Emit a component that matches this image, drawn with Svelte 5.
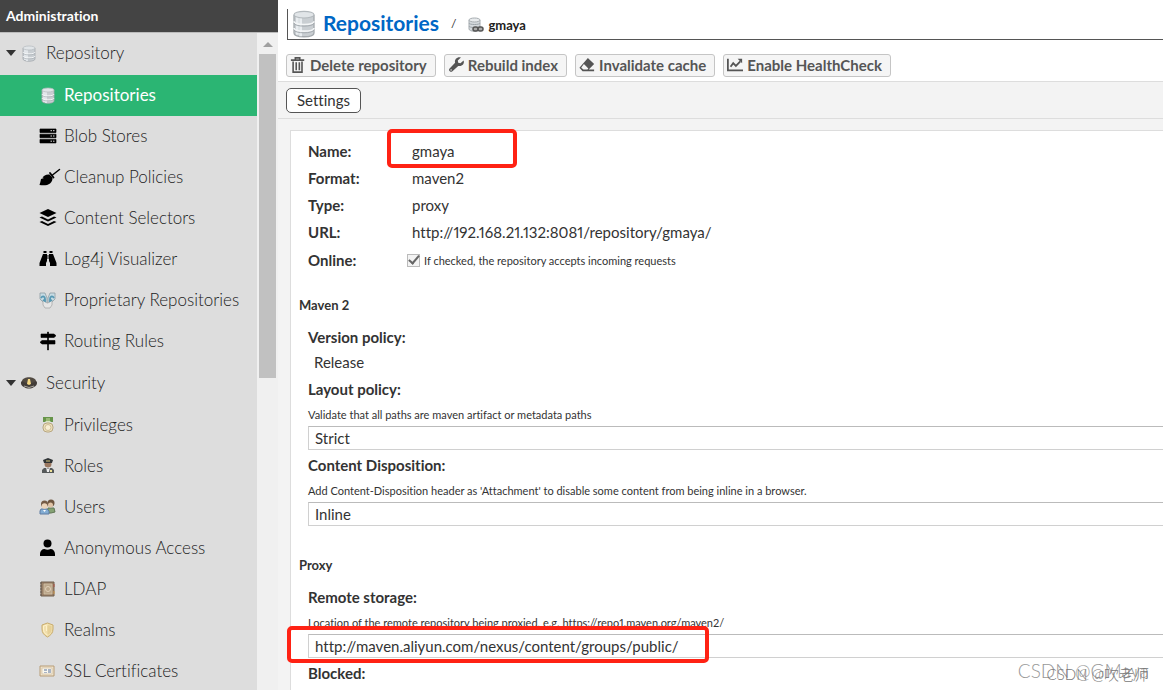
<script>
  let online = true;
  let layoutPolicy = 'Strict';
  let disposition = 'Inline';
  let remoteUrl = 'http://maven.aliyun.com/nexus/content/groups/public/';
  let selected = 'Repositories';

  const tree = [
    {
      name: 'Repository',
      icon: 'database',
      items: [
        { name: 'Repositories', icon: 'database' },
        { name: 'Blob Stores', icon: 'server' },
        { name: 'Cleanup Policies', icon: 'broom' },
        { name: 'Content Selectors', icon: 'layers' },
        { name: 'Log4j Visualizer', icon: 'binoculars' },
        { name: 'Proprietary Repositories', icon: 'proprietary' },
        { name: 'Routing Rules', icon: 'signs' }
      ]
    },
    {
      name: 'Security',
      icon: 'cap',
      items: [
        { name: 'Privileges', icon: 'medal' },
        { name: 'Roles', icon: 'officer' },
        { name: 'Users', icon: 'users' },
        { name: 'Anonymous Access', icon: 'person' },
        { name: 'LDAP', icon: 'book' },
        { name: 'Realms', icon: 'shield' },
        { name: 'SSL Certificates', icon: 'certificate' }
      ]
    }
  ];

  const actions = [
    { name: 'Delete repository', icon: 'trash' },
    { name: 'Rebuild index', icon: 'wrench' },
    { name: 'Invalidate cache', icon: 'eraser' },
    { name: 'Enable HealthCheck', icon: 'chart' }
  ];

  const summary = [
    ['Name:', 'gmaya'],
    ['Format:', 'maven2'],
    ['Type:', 'proxy'],
    ['URL:', 'http://192.168.21.132:8081/repository/gmaya/']
  ];
</script>

{#snippet icon(name)}
  <svg class="icon" viewBox="0 0 18 18" aria-hidden="true">
    {#if name === 'database'}
      <path d="M3 4v11c0 3 12 3 12 0V4" fill="#c9ced2" stroke="#a5aaae" stroke-width=".8" />
      <path d="M5 5v11M7 6v11" stroke="#e9edf0" stroke-width="1.6" />
      <path d="M3 8c0 2.500 12 2.500 12 0M3 12c0 2.500 12 2.500 12 0" fill="none" stroke="#f4f6f7" />
      <path d="M3 9c0 2.500 12 2.500 12 0M3 13c0 2.500 12 2.500 12 0" fill="none" stroke="#a5abb0" stroke-width=".6" />
      <ellipse cx="9" cy="4" rx="6" ry="2" fill="#e1e5e8" stroke="#b3b9bd" stroke-width=".7" />
    {:else if name === 'server'}
      <path d="M1 2h16v3.500H1zM1 7.200h16v3.500H1zM1 12.400h16v3.500H1z" fill="#000" stroke="#000" stroke-width=".7" stroke-linejoin="round" />
      <path d="M11.500 3.700h1.500m1 0h1.500M11.500 9h1.500m1 0h1.500M11.500 14.200h1.500m1 0h1.500" stroke="#ddd" />
    {:else if name === 'broom'}
      <path d="M20.500 1.500 13.500 7" stroke="#000" stroke-width="1.500" stroke-linecap="round" />
      <path d="m11 5 3.500 4.500" stroke="#000" stroke-width="1.800" stroke-linecap="round" />
      <path d="M10.500 6.500c-3-.5-6 1-7 3l1.500.5-3 1c-.5 2-.7 4-1.500 6 4 .7 8 .5 10.500-1.500 1.800-1.500 2.800-4 2.500-6z" />
    {:else if name === 'layers'}
      <path d="m9 0 8.500 4L9 8 .5 4z" />
      <path d="m.5 8.500 2.500-1 6 3 6-3 2.500 1L9 12.500z" />
      <path d="m.5 13 2.500-1 6 3 6-3 2.500 1L9 17z" />
    {:else if name === 'binoculars'}
      <path d="M4.500 1h3v2h-3zM10.500 1h3v2h-3zM4 4h4v7l-1 2v3H.5v-3zM10 4h4l3.500 9v3H11v-3l-1-2zM8.500 5h1v4h-1z" />
    {:else if name === 'proprietary'}
      <path d="M1 2h5l2 5v6l-3-1-4-4zM16 2h-5L9 7v6l3-1 4-4z" fill="#c6dbe3" stroke="#8d9da3" stroke-width=".8" />
      <path d="M4 9l4 3h1l4-3v5l-2 3H6l-2-3z" fill="#e6e6e6" stroke="#a8aaaa" stroke-width=".8" />
      <path d="M2 7c2-3 4-1 4 1v2L4 9M15 7c-2-3-4-1-4 1v2l2-1" fill="none" stroke="#5798b3" stroke-width="1.800" />
    {:else if name === 'signs'}
      <path d="M8.500 0h1v18h-1zM2 2h13l2 1.700-2 1.800H2zM3 8.500h13V12H3l-2-1.700z" stroke="#000" stroke-width=".6" />
    {:else if name === 'cap'}
      <path d="M2 7c1-5 13-5 14 0v3H2z" fill="#514a42" />
      <path d="M2 7C0 8 1 12 4 13c3 2 7 2 10 0 3-1 4-5 2-6-4 3-10 3-14 0z" fill="#413c38" />
      <path d="M4 12q5 3 10 0" fill="none" stroke="#aaa79f" />
      <path d="M8 5h2l1 5-2 1-2-1z" fill="#f4d782" />
    {:else if name === 'medal'}
      <path d="M4 1h10v5H4z" fill="#669449" />
      <path d="M7 2h4v3H7z" fill="#9ab975" />
      <path d="m6 5 3 3 3-3" fill="#d9e5c2" />
      <rect x="4" y="7" width="10" height="9" rx="4" fill="#efe3bd" stroke="#b7a681" />
      <circle cx="9" cy="11.500" r="3" fill="#f8eed3" stroke="#cdbd96" />
    {:else if name === 'officer'}
      <path d="m5 11 8 0 2 2v3H3v-3z" fill="#55595a" />
      <circle cx="9" cy="7" r="3.500" fill="#9c7961" />
      <path d="M4 3 9 1l5 2-1 3H5z" fill="#303436" />
      <path d="m7 10 2 2 2-2-1 5H8z" fill="#eee" />
      <path d="M7 4h4" stroke="#d2c077" />
      <path d="m11 14 2 0" stroke="#eee196" stroke-width="2" />
    {:else if name === 'users'}
      <path d="M9 10h6l1 4-4 1H8z" fill="#85a274" stroke="#617656" />
      <circle cx="12" cy="5" r="3.500" fill="#6d553f" />
      <circle cx="11.500" cy="7" r="2.500" fill="#dfc3a6" />
      <path d="M2 11h6l2 2v3H1v-3z" fill="#83add3" stroke="#5e7da3" />
      <circle cx="5.500" cy="6" r="3.500" fill="#745b46" />
      <circle cx="5.500" cy="8" r="2.800" fill="#ebd3b9" />
      <path d="m4 12 1.500 2L7 12" fill="#fff" />
    {:else if name === 'person'}
      <circle cx="8.500" cy="4.500" r="4" />
      <path d="M1 17v-2c0-3 2-5 4.500-5 2 1 4 1 6 0C14 10 16 12 16 15v2z" />
    {:else if name === 'book'}
      <path d="M2 2h13v14H2z" fill="#9b8168" stroke="#72604f" />
      <path d="M5 4h8v10H5z" fill="#bba68a" stroke="#d5c6ae" stroke-width=".7" />
      <path d="M1 3h2M1 6h2M1 9h2M1 12h2M1 15h2" stroke="#665d55" />
      <circle cx="9" cy="9" r="2.500" fill="none" stroke="#e1d1b9" />
      <path d="M15 4v3" stroke="#ae5247" /><path d="M15 11v3" stroke="#d19a4e" />
    {:else if name === 'shield'}
      <path d="m8.500 2 5.500 2v4c0 4-2 6-5.500 8C5 14 3 12 3 8V4z" fill="#f0dfad" stroke="#c9ac6c" />
      <path d="m8.500 4 4 1v3c0 3-1 4-4 6z" fill="#e6d096" />
      <path d="m8.500 4-4 1v3c0 3 1 4 4 6M7.500 5v5" fill="none" stroke="#fff1c9" />
    {:else if name === 'certificate'}
      <path d="M1 4h14v10H1z" fill="#eee2cb" stroke="#b79c77" />
      <path d="M3 6h10v6H3z" fill="#faf8ef" stroke="#d1bea1" stroke-width=".7" />
      <path d="M5 7h3v2H5zm4 0h3v4H9zm-4 3h3v1H5z" fill="#a9b4c4" />
    {:else if name === 'trash'}
      <path d="M6 3V1h5v2M1 3.500h15M3.500 5v12h10V5M7 6v9m3.500-9v9" fill="none" stroke="#555" stroke-width="1.800" />
    {:else if name === 'wrench'}
      <path d="M17.500 4 14 7l-2.500-.5L11 4 14.500.5c-4-1-7.500 2-6.500 6L1.800 13c-2 2 1.200 5 3.200 3l6.500-6c4 1 7.500-2 6-6z" fill="#555" />
      <circle cx="3.500" cy="14.500" r=".8" fill="#fff" />
    {:else if name === 'eraser'}
      <path d="m10 1 7 7-6 6h6v2H4l-3.500-4z" fill="#555" />
      <path d="m2.500 12 3-4 5 5-1 1H5z" fill="#f5f5f5" />
    {:else if name === 'chart'}
      <path d="M1 2v13h17M4 11l3-4 3 3 5-5" fill="none" stroke="#555" stroke-width="2" />
      <path d="M12 2h5v5z" fill="#555" />
    {/if}
  </svg>
{/snippet}

<div class="app">
  <aside>
    <h2>Administration</h2>
    <div class="scroller">
      <nav aria-label="Administration">
        {#each tree as group}
          <button class="row group"><span class="arrow"></span>{@render icon(group.icon)}{group.name}</button>
          <ul>
            {#each group.items as item}
              <li>
                <a class="row" class:selected={selected === item.name} href="#admin" on:click|preventDefault={() => (selected = item.name)}>
                  {@render icon(item.icon)}{item.name}
                </a>
              </li>
            {/each}
          </ul>
        {/each}
      </nav>
      <div class="scrollbar"><span class="up"></span><div class="thumb"></div></div>
    </div>
  </aside>

  <main>
    <header>
      {@render icon('database')}
      <h1><a href="#repositories">Repositories</a></h1>
      <span class="slash">/</span>
      <span class="crumb">
        <svg viewBox="0 0 16 16" aria-hidden="true">
          <path d="M1 3v9c0 3 11 3 11 0V3" fill="#d5dade" stroke="#a6acb0" />
          <path d="M1 6c0 2 11 2 11 0M1 9c0 2 11 2 11 0" fill="none" stroke="#9ca3a8" />
          <ellipse cx="6.500" cy="3" rx="5.500" ry="2" fill="#e8ebed" stroke="#a6acb0" />
          <rect x="5" y="10" width="5" height="4" rx="2" fill="#aaa" stroke="#555" stroke-width="1.500" />
          <rect x="10" y="10" width="5" height="4" rx="2" fill="#aaa" stroke="#555" stroke-width="1.500" />
        </svg>
        gmaya
      </span>
    </header>

    <div class="toolbar">
      {#each actions as action}
        <button>{@render icon(action.icon)}{action.name}</button>
      {/each}
    </div>

    <div class="tabs"><button>Settings</button></div>

    <div class="body">
      <form on:submit|preventDefault>
        <dl>
          {#each summary as [label, value], i}
            <dt>{label}</dt>
            <dd class:marked={i === 0}>{value}</dd>
          {/each}
        </dl>
        <div class="online">
          <label class="label" for="online">Online:</label>
          <span class="tick">
            <input id="online" type="checkbox" bind:checked={online} />
            <span>If checked, the repository accepts incoming requests</span>
          </span>
        </div>

        <h3>Maven 2</h3>
        <section>
          <div class="label">Version policy:</div>
          <div class="value">Release</div>
          <label class="label" for="layout">Layout policy:</label>
          <p>Validate that all paths are maven artifact or metadata paths</p>
          <select id="layout" bind:value={layoutPolicy}>
            <option>Strict</option>
            <option>Permissive</option>
          </select>
          <label class="label" for="disposition">Content Disposition:</label>
          <p>Add Content-Disposition header as 'Attachment' to disable some content from being inline in a browser.</p>
          <select id="disposition" bind:value={disposition}>
            <option>Inline</option>
            <option>Attachment</option>
          </select>
        </section>

        <h3 class="proxy">Proxy</h3>
        <section>
          <label class="label" for="remote">Remote storage:</label>
          <p>Location of the remote repository being proxied, e.g. https://repo1.maven.org/maven2/</p>
          <div class="remote"><input id="remote" type="text" bind:value={remoteUrl} /></div>
          <div class="label">Blocked:</div>
        </section>
      </form>
    </div>
  </main>
  <div class="watermark">CSDN @GMaya</div>
  <div class="watermark small">CSDN @吹老师</div>
</div>

<style>
  :global(body) {
    overflow: hidden;
  }

  .app {
    position: relative;
    display: flex;
    height: 100vh;
    overflow: hidden;
    background: #fff;
    color: #333;
    font: 15px/20px Lato, 'Noto Sans CJK SC', sans-serif;
    font-variant-numeric: proportional-nums;
    font-variant-ligatures: none;
  }

  .app *,
  .app *::after {
    box-sizing: border-box;
  }

  button,
  input,
  select {
    font: inherit;
    color: inherit;
  }

  .icon {
    flex: none;
    width: 18px;
    height: 18px;
    overflow: visible;
  }

  aside {
    display: flex;
    flex-direction: column;
    flex: none;
    width: 278px;
  }

  h2 {
    margin: 0;
    padding: 6px;
    height: 33px;
    border-bottom: 1px solid #bbb;
    background: #444;
    color: #fff;
    font-size: 14px;
    line-height: 20px;
  }

  .scroller {
    display: flex;
    flex: 1;
    min-height: 0;
  }

  nav {
    flex: 1;
    overflow: hidden;
    background: #ddd;
  }

  ul {
    list-style: none;
    margin: 0;
    padding: 1px 0;
  }

  .row {
    display: flex;
    align-items: center;
    gap: 7px;
    width: 100%;
    height: 41px;
    padding: 0 0 1px 39px;
    border: 0;
    background: none;
    color: #222;
    font-size: 17px;
    font-weight: 300;
    text-decoration: none;
    text-align: left;
    white-space: nowrap;
  }

  .group {
    gap: 8px;
    padding-left: 6px;
  }

  .group .icon {
    margin-left: -4px;
  }

  .row.selected {
    background: #2bb573;
    color: #fff;
    font-weight: 400;
  }

  .arrow {
    border: 5px solid transparent;
    border-top: 6px solid #333;
    border-bottom: 0;
  }

  .scrollbar {
    width: 21px;
    padding: 9px 2px 0;
    background: #f0f0f0;
  }

  .up {
    display: block;
    width: 0;
    margin: 0 auto 7px;
    border: 5px solid transparent;
    border-top: 0;
    border-bottom: 5px solid #a0a0a0;
  }

  .thumb {
    height: 47vh;
    background: #c1c1c1;
  }

  main {
    display: flex;
    flex-direction: column;
    flex: 1;
    min-width: 0;
  }

  header {
    display: flex;
    align-items: center;
    height: 31px;
    margin: 9px 0 0 9px;
    padding-bottom: 2px;
    border-left: 1px solid #555;
    border-bottom: 1px solid #555;
  }

  header .icon {
    width: 32px;
    height: 30px;
  }

  h1 {
    margin: 0 0 0 3px;
    font-size: 21px;
    line-height: 28px;
  }

  h1 a {
    color: #0067c5;
    text-decoration: none;
  }

  .slash {
    margin: 0 12px;
    padding-top: 2px;
    font-size: 12px;
  }

  .crumb {
    display: flex;
    align-items: center;
    gap: 4px;
    padding-top: 4px;
    color: #222;
    font-size: 13px;
    font-weight: 700;
  }

  .crumb svg {
    width: 16px;
    height: 16px;
  }

  .toolbar {
    display: flex;
    gap: 8px;
    padding: 14px 8px 4px;
    border-bottom: 1px solid #ddd;
  }

  .toolbar button {
    display: flex;
    align-items: center;
    gap: 4px;
    height: 23px;
    padding: 0 8px 2px 3px;
    border: 1px solid #c5c5c5;
    border-radius: 3px;
    background: #f5f5f5;
    color: #555;
    font-weight: 700;
    white-space: nowrap;
  }

  .toolbar .icon {
    width: 16px;
    height: 16px;
  }

  .tabs {
    padding: 6px 8px 5px;
    border-bottom: 1px solid #ddd;
    background: #f3f3f3;
  }

  .tabs button {
    display: block;
    height: 25px;
    padding: 0 10px 2px;
    border: 1px solid #555;
    border-radius: 5px;
    background: #fff;
  }

  .body {
    flex: 1;
    min-height: 0;
    padding: 11px 0 0 12px;
    background: #f3f3f3;
  }

  form {
    height: 100%;
    padding: 7px 0 0 8px;
    border: solid #ddd;
    border-width: 1px 0 0 1px;
    background: #fff;
  }

  dl {
    display: grid;
    grid-template-columns: 104px 1fr;
    margin: 0 0 0 9px;
    line-height: 27px;
  }

  dt,
  .label {
    font-weight: 700;
  }

  dd {
    position: relative;
    margin: 0;
  }

  .marked::after,
  .remote::after {
    content: '';
    position: absolute;
    border: 4px solid #ff2214;
    border-radius: 5px;
    pointer-events: none;
  }

  .marked::after {
    left: -25px;
    top: -9px;
    width: 130px;
    height: 39px;
  }

  .online {
    display: grid;
    grid-template-columns: 99px 1fr;
    align-items: center;
    height: 27px;
    margin-left: 9px;
  }

  .tick {
    display: flex;
    align-items: center;
    gap: 4px;
    padding-top: 2px;
    font-size: 11px;
  }

  .tick input {
    position: relative;
    appearance: none;
    width: 13px;
    height: 13px;
    margin: 0;
    border: 1px solid #bbb;
    background: #f3f3f3;
  }

  .tick input:checked::after {
    content: '';
    position: absolute;
    left: 3px;
    top: -2px;
    width: 6px;
    height: 11px;
    border: solid #666;
    border-width: 0 2px 2px 0;
    transform: rotate(40deg);
  }

  h3 {
    margin: 22px 0 10px;
    font-size: 13px;
    line-height: 20px;
  }

  .proxy {
    margin-top: 29px;
  }

  section {
    padding-left: 9px;
  }

  .label {
    display: block;
    line-height: 24px;
  }

  .value {
    padding: 0 0 2px 6px;
    line-height: 26px;
  }

  p {
    margin: 0;
    padding-top: 4px;
    font-size: 11px;
    line-height: 20px;
    white-space: nowrap;
  }

  select,
  input[type='text'] {
    appearance: none;
    display: block;
    width: 100%;
    height: 24px;
    margin: 1px 0 3px;
    padding: 0 6px 1px;
    border: 1px solid #d0d0d0;
    border-top-color: #bbb;
    border-right: 0;
    border-radius: 0;
    background: #fff;
    outline: 0;
  }

  .remote {
    position: relative;
  }

  .remote::after {
    left: -21px;
    top: -8px;
    width: 422px;
    height: 37px;
  }

  .watermark {
    position: absolute;
    right: 14px;
    bottom: 9px;
    color: #999;
    font-size: 19px;
    font-weight: 300;
    pointer-events: none;
  }

  .small {
    bottom: 6px;
    color: #777;
    font-size: 15px;
  }
</style>
